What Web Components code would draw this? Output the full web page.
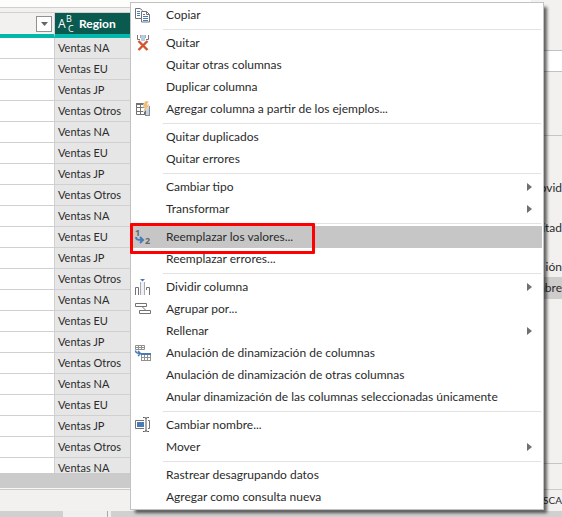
<!DOCTYPE html>
<html lang="es">
<head>
<meta charset="utf-8">
<title>Editor de consultas</title>
<style>
html, body { margin: 0; height: 100%; }
body { overflow: hidden; font: 12px/16px Lato, "Open Sans", sans-serif; color: #2b2b2b; background: #f2f1f0; }
</style>
</head>
<body>
<query-editor></query-editor>
<script>
class Base extends HTMLElement {
  connectedCallback() {
    if (this.shadowRoot) return;
    this.attachShadow({ mode: 'open' }).innerHTML = this.render();
  }
}

const icons = {
  copy: `<g fill="#fff" stroke="#737373"><path d="M6 11.5H.5v-10H5L7.500 3.500"/><path d="M6.500 4.500h5l3 3v7.500h-8z"/><path d="M11.500 4.500v3h3" fill="none"/></g><path d="M2 4.500h3M2 6.500h3M2 8.500h3M8 7.500h2M8 9.500h5M8 11.500h5M8 13.500h5" stroke="#4a7ab5"/>`,
  remove: `<path d="M6 0h4v6H6z" fill="#b9cae4"/><path d="M2.500 0v4.500H5M13.500 0v4.500H11" stroke="#777" fill="none"/><path d="M5.500 0v3M10.500 0v3" stroke="#aaa"/><path d="M3.500 6l9 9M12.500 6l-9 9" stroke="#d4522e" stroke-width="2.400"/>`,
  example: `<path d="M9 3h5v11H9z" fill="#c5d3e8"/><path d="M1.500 2.500h9v11h-9zM1 6.500h9M1 10.500h9M5.500 3v11M9.500 8v6" stroke="#737373" fill="none"/><path d="M1 2h9v2H1z" fill="#737373"/><path d="M14.500 5v9M10 14.500h5" stroke="#8a8a8a"/><path d="M10 0h4l-2 4h3l-7 8 2-6H7.500z" fill="#eebd73" stroke="#fff" stroke-width=".500"/>`,
  replace: `<g font-family="Open Sans, sans-serif" font-weight="700" font-size="9" fill="#666"><text x="0" y="7">1</text><text x="10" y="15">2</text></g><path d="M1 8c0 3 2 3 6 3M5 8l3 3-3 3" stroke="#4a7ab5" stroke-width="2" fill="none"/>`,
  split: `<path d="M6 3h4v13H6z" fill="#edf1f7"/><path d="M5.500 3v13M9.500 3v13" stroke="#aaa"/><path d="M.5 16V8.500H3.500V16M14.500 16V8.500H11.500V11" fill="none" stroke="#737373"/><path d="M5 0h5L7.500 2.500z" fill="#4a7ab5"/>`,
  group: `<path d="M.5 2.500h11v3H.5zM4.500 9.500h11v3h-11zM7 5.500l4 4" fill="none" stroke="#737373"/>`,
  unpivot: `<path d="M.5.500h9v4h-9zM0 2.500h10M3.500 0v5M6.500 0v5M6.500 9v7M9.500 9v7M12.500 9v7M15.500 9v7M6 12.500h10M6 15.500h10" fill="none" stroke="#909090"/><path d="M6 8h10v2H6z" fill="#4a7ab5"/><path d="M.5 5.500c0 2 1 3 5 3M3 6l2.500 2.500L3 11" stroke="#4a7ab5" stroke-width="1.500" fill="none"/>`,
  rename: `<path d="M9 3.500H.5v8H9M13 3.500h1.500v8H13" fill="none" stroke="#737373"/><path d="M2 5h7v5H2z" fill="#4a7ab5"/><path d="M8 .5h1.500q1.500 0 1.500 1 0-1 1.500-1H14M8 14.500h1.500q1.500 0 1.500-1 0 1 1.500 1H14M11 1v13" fill="none" stroke="#555"/>`
};

customElements.define('menu-item', class extends Base {
  render() {
    const icon = icons[this.getAttribute('icon')] || '';
    return `<style>
      :host { display: block; position: relative; }
      button { display: grid; grid-template-columns: 16px 1fr auto; column-gap: 15px; align-items: center; width: 100%; height: 22px; padding: 0 10px 0 3px; border: 0; background: none; font: inherit; color: inherit; text-align: left; white-space: nowrap; }
      :host([active]) button { background: #c6c6c6; }
      svg { display: block; overflow: visible; }
      .mark { position: absolute; left: -2px; top: -3px; width: 185px; height: 31px; box-sizing: border-box; border: 3px solid #f00; border-radius: 1px; z-index: 1; }
    </style>
    <button type="button" role="menuitem"${this.hasAttribute('sub') ? ' aria-haspopup="true"' : ''}>
      <svg width="16" height="16" viewBox="0 0 16 16" aria-hidden="true">${icon}</svg>
      <span><slot></slot></span>
      ${this.hasAttribute('sub') ? '<svg width="5" height="8" viewBox="0 0 5 8" aria-hidden="true"><path d="M0 0l5 4-5 4z" fill="#707070"/></svg>' : ''}
    </button>${this.hasAttribute('active') ? '<div class="mark"></div>' : ''}`;
  }
});

customElements.define('menu-separator', class extends Base {
  render() {
    return `<style>:host { display: flex; align-items: center; height: 6px; padding: 0 1px 0 31px; } i { flex: 1; height: 1px; background: #e2e2e2; }</style><i></i>`;
  }
});

customElements.define('context-menu', class extends Base {
  render() {
    return `<style>:host { display: block; box-sizing: border-box; padding: 1px; border: 1px solid #c2c2c2; background: #fff; color: #2b2b2b; box-shadow: 4px 4px 3px -1px rgba(0,0,0,.6); }</style><div role="menu"><slot></slot></div>`;
  }
});

customElements.define('data-grid', class extends Base {
  render() {
    const cycle = ['Ventas NA', 'Ventas EU', 'Ventas JP', 'Ventas Otros'];
    const rows = Array.from({ length: 21 }, (_, i) => `<tr><td></td><td class="sel">${cycle[i % 4]}</td></tr>`).join('');
    return `<style>
      :host { display: block; overflow: hidden; background: #fff; border-top: 1px solid #d0d0d0; }
      table { width: 100%; border-collapse: separate; border-spacing: 0; table-layout: fixed; line-height: 16px; }
      .first { width: 54px; }
      th { height: 21px; padding: 0; background: #f2f1f0; border-right: 1px solid #d0d0d0; border-bottom: 4px solid #01b8aa; text-align: left; }
      th.sel { background: #0b5a50; color: #fff; padding-left: 3px; }
      td { box-sizing: border-box; height: 21px; padding: 0 3px; border-right: 1px solid #d0d0d0; border-bottom: 1px solid #d0d0d0; white-space: nowrap; font-size: 11px; }
      td.sel { background: #e6e6e6; }
      th div { display: flex; align-items: center; gap: 4px; }
      th.first div { justify-content: flex-end; padding-right: 2px; }
      button { display: grid; place-items: center; width: 16px; height: 16px; padding: 0; border: 1px solid #919191; background: #fff; }
      svg { display: block; }
      .type { display: grid; grid-template-columns: 8px 9px; font: 12px/20px "Open Sans", sans-serif; height: 20px; }
      .type small { display: grid; grid-template-rows: 10px 10px; font-size: 9px; line-height: 10px; }
      .type small span + span { padding-left: 2px; }
    </style>
    <table>
      <thead><tr>
        <th class="first"><div><button type="button" aria-label="Filtrar"><svg width="7" height="4" viewBox="0 0 7 4"><path d="M0 0h7L3.500 4z" fill="#666"/></svg></button></div></th>
        <th class="sel"><div><span class="type"><span>A</span><small><span>B</span><span>C</span></small></span><span>Region</span></div></th>
      </tr></thead>
      <tbody>${rows}</tbody>
    </table>`;
  }
});

customElements.define('settings-panel', class extends Base {
  render() {
    return `<style>
      :host { display: flex; flex-direction: column; overflow: hidden; background: #f2f1f0; border-bottom: 1px solid #c6c6c6; box-sizing: border-box; }
      input { height: 22px; margin: 50px 0 63px; box-sizing: border-box; width: 100%; border: 1px solid #c2c2c2; border-width: 1px 0; background: #fff; border-radius: 0; padding: 0; }
      ol { list-style: none; margin: 0; padding: 41px 0 0; border-top: 1px solid #c6c6c6; white-space: nowrap; text-align: right; }
      li { height: 22px; line-height: 22px; margin-bottom: 18px; }
      li.tight { margin-bottom: 0; height: 20px; line-height: 20px; }
      li.on { background: #cfcccc; }
    </style>
    <input aria-label="Nombre">
    <ol><li>ovid</li><li>itad</li><li class="tight">ión</li><li class="on">mbre</li></ol>`;
  }
});

customElements.define('query-editor', class extends Base {
  render() {
    return `<style>
      :host { display: grid; grid-template-rows: 1fr 25px 22px 6px; grid-template-columns: minmax(0, 1fr) 31px; height: 100vh; position: relative; }
      .center { grid-row: 1 / 3; display: grid; grid-template-rows: 7px 1px 4px minmax(0, 1fr) 16px; min-height: 0; background: #f2f1f0; }
      .top { background: #fdfdfc; }
      .line { background: #d0d0d0; }
      .scroll { background: #cbcbcb; border-bottom: 1px solid #f8f8f8; }
      settings-panel { grid-column: 2; grid-row: 1; }
      .status { grid-column: 1 / -1; grid-row: 3; box-sizing: border-box; border-top: 1px solid #cbcbcb; background: #f2f1f0; text-align: right; line-height: 20px; font-size: 10px; overflow: hidden; white-space: nowrap; }
      .task { grid-column: 1 / -1; grid-row: 4; display: flex; background: #d0d0d0; }
      .task i { width: 44px; margin-left: 63px; background: #efefef; border-right: 1px solid #aaa; }
      .task b { width: 3px; background: #efefef; }
      context-menu { position: absolute; left: 130px; right: 18px; top: 2px; z-index: 2; }
    </style>
    <div class="center"><div class="top"></div><div class="line"></div><div></div><data-grid></data-grid><div class="scroll"></div></div>
    <settings-panel></settings-panel>
    <div class="status">ESCA</div>
    <div class="task"><i></i><b></b></div>
    <context-menu>
      <menu-item icon="copy">Copiar</menu-item>
      <menu-separator></menu-separator>
      <menu-item icon="remove">Quitar</menu-item>
      <menu-item>Quitar otras columnas</menu-item>
      <menu-item>Duplicar columna</menu-item>
      <menu-item icon="example">Agregar columna a partir de los ejemplos...</menu-item>
      <menu-separator></menu-separator>
      <menu-item>Quitar duplicados</menu-item>
      <menu-item>Quitar errores</menu-item>
      <menu-separator></menu-separator>
      <menu-item sub>Cambiar tipo</menu-item>
      <menu-item sub>Transformar</menu-item>
      <menu-separator></menu-separator>
      <menu-item icon="replace" active>Reemplazar los valores...</menu-item>
      <menu-item>Reemplazar errores...</menu-item>
      <menu-separator></menu-separator>
      <menu-item icon="split" sub>Dividir columna</menu-item>
      <menu-item icon="group">Agrupar por...</menu-item>
      <menu-item sub>Rellenar</menu-item>
      <menu-item icon="unpivot">Anulación de dinamización de columnas</menu-item>
      <menu-item>Anulación de dinamización de otras columnas</menu-item>
      <menu-item>Anular dinamización de las columnas seleccionadas únicamente</menu-item>
      <menu-separator></menu-separator>
      <menu-item icon="rename">Cambiar nombre...</menu-item>
      <menu-item sub>Mover</menu-item>
      <menu-separator></menu-separator>
      <menu-item>Rastrear desagrupando datos</menu-item>
      <menu-item>Agregar como consulta nueva</menu-item>
    </context-menu>`;
  }
});
</script>
</body>
</html>
